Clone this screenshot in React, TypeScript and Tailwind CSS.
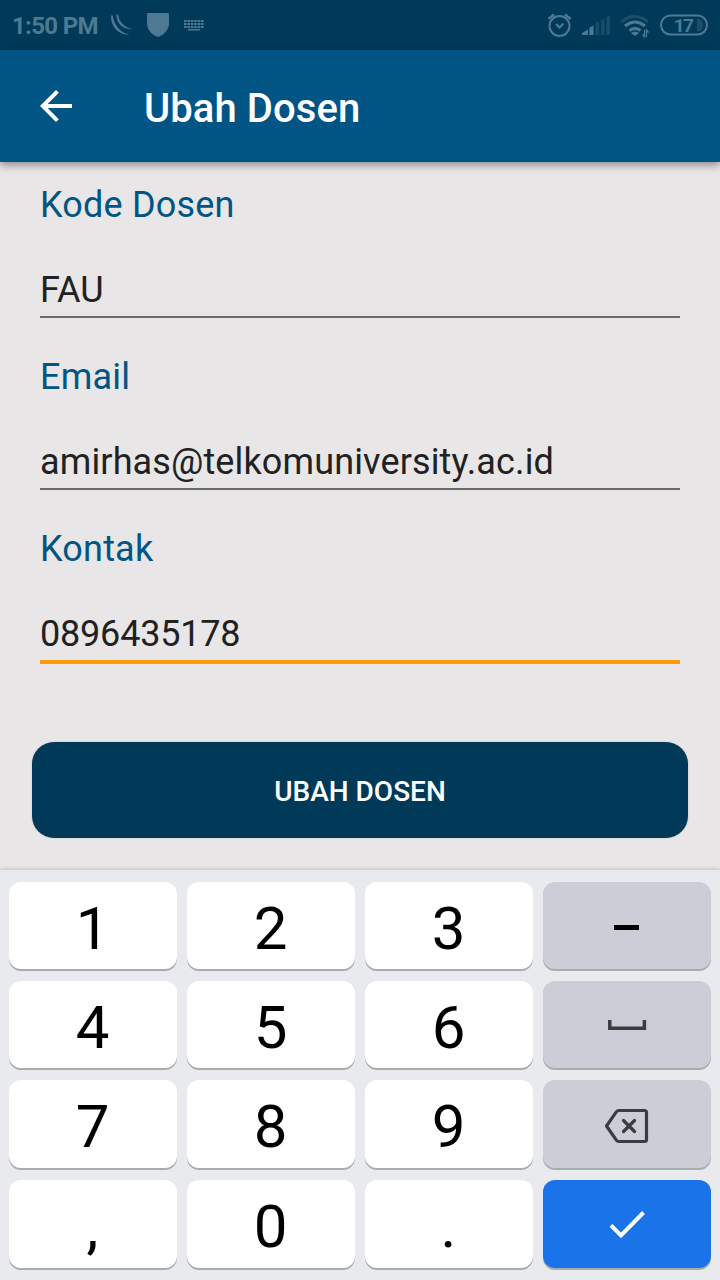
import React from "react";

type Field = { label: string; value: string; focused?: boolean };

const fields: Field[] = [
  { label: "Kode Dosen", value: "FAU" },
  { label: "Email", value: "amirhas@telkomuniversity.ac.id" },
  { label: "Kontak", value: "0896435178", focused: true },
];

function StatusBar() {
  return (
    <header className="flex h-[50px] shrink-0 items-center bg-[#003a58] pl-3 pr-3 text-[#4d7a92]">
      <span className="w-[98px] whitespace-nowrap pt-[2px] text-[24px] leading-7 font-bold tracking-[-0.65px]">1:50 PM</span>
      <svg className="h-[50px] w-[24px]" viewBox="110 0 24 50" fill="currentColor">
        <path d="M111 15.500c-.5 11 8 20.500 19 19-8-.8-16-8.500-17.200-19z" />
        <path d="M116.500 14.500c-.5 8 6 15.800 16 14.300-7-.5-13-6-14.500-14.300z" />
      </svg>
      <svg className="ml-[12px] h-[50px] w-[24px]" viewBox="146 0 24 50" fill="currentColor">
        <path d="M148 13h20q1 0 1 1v9c0 6-4 11-9.500 13.500q-1.500.7-3 0C151 34 147 29 147 23v-9q0-1 1-1z" />
      </svg>
      <svg className="ml-[12px] h-[50px] w-[24px]" viewBox="182 0 24 50" fill="none" stroke="currentColor" strokeWidth="2">
        <path d="M184 21h20M184 24h20M184 27h20" strokeDasharray="2.600 .8" />
        <path d="M188 29.700h12" strokeWidth="1.600" />
      </svg>
      <div className="ml-auto flex items-center">
        <svg className="h-[50px] w-[28px]" viewBox="546 0 28 50" fill="none" stroke="currentColor" strokeWidth="2">
          <circle cx="559.500" cy="26" r="10" />
          <path d="M556 24l3.500 3.500 4-4" />
          <path d="M548.500 19l5.500-4.500M565 14.500l5.500 4.500" strokeWidth="2.500" />
        </svg>
        <svg className="ml-[6px] h-[50px] w-[32px]" viewBox="580 0 32 50" fill="currentColor">
          <path d="M582 35v-2l6-3.500V35zM589.500 35v-7.500l4-2V35z" />
          <path d="M595.500 35V23.500l3.500-2V35zM601 35V20.500l3.500-2V35zM606.500 35V17l3.500-2v20z" opacity=".3" />
        </svg>
        <svg className="ml-[6px] h-[50px] w-[34px]" viewBox="618 0 34 50" fill="none" stroke="currentColor" strokeWidth="3">
          <path d="M621.500 22q13-11 26.500 0" opacity=".35" />
          <path d="M625 26q10-8 20 0M629.500 30.500q5.500-4 11 0" />
          <path d="M631 33q4-3 8 0l-4 3z" fill="currentColor" stroke="none" />
          <path d="M644.500 30v7l-2-2.500M646.500 37v-7l2 2.500" strokeWidth="1.300" />
        </svg>
        <div className="ml-[8px] flex h-[21px] w-[48px] -translate-y-[0.500px] items-center justify-end rounded-full border-2 border-current pr-[3px]">
          <span className="mr-[5px] text-[19px] leading-none font-bold tracking-[-1.800px]">17</span>
          <span className="h-[13px] w-[6px] rounded-r-full bg-[#1b4f6b]" />
        </div>
      </div>
    </header>
  );
}

function TextField({ label, value, focused }: Field) {
  return (
    <label className="flex h-[172px] flex-col text-[36px] leading-[42px] tracking-[0.130px]">
      <span className="tracking-[0.200px] text-[#005585]">{label}</span>
      <span
        className={
          focused
            ? "mt-[43px] h-[51px] border-b-4 border-[#ff9a0a] tracking-[-0.200px] text-[#212121]"
            : "mt-[43px] h-[49px] border-b-2 border-[#6c6b6c] text-[#212121]"
        }
      >
        {value}
      </span>
    </label>
  );
}

function SpaceIcon() {
  return (
    <svg className="h-[40px] w-[48px]" viewBox="603 1005 48 40" fill="none" stroke="#3c3c3e" strokeWidth="3.500">
      <path d="M609.800 1020v8.300h34.600V1020" />
    </svg>
  );
}

function BackspaceIcon() {
  return (
    <svg className="h-[44px] w-[48px]" viewBox="603 1102 48 44" fill="none" stroke="#3c3c3e" strokeWidth="3.200" strokeLinejoin="round">
      <path d="M618.500 1110.500h26q2 0 2 2v27q0 2-2 2h-26q-1 0-2-1.200l-10-14.300 10-14.300q1-1.200 2-1.200z" />
      <path d="M623.500 1120.500l11 11M634.500 1120.500l-11 11" strokeLinecap="round" />
    </svg>
  );
}

function CheckIcon() {
  return (
    <svg className="h-[40px] w-[48px]" viewBox="603 1204 48 40" fill="none" stroke="white" strokeWidth="4">
      <path d="M611 1225.300l10 10L643.500 1212.500" />
    </svg>
  );
}

function Key({ children, tone = "light" }: { children: React.ReactNode; tone?: "light" | "gray" | "blue" }) {
  const tones = {
    light: "bg-white pt-[6px] pr-px",
    gray: "bg-[#cbced6]",
    blue: "bg-[#1a73e8]",
  };
  return (
    <button
      className={`flex items-center justify-center rounded-[12px] text-[60px] leading-[70px] text-black shadow-[0_2px_0_#a9abae] ${tones[tone]}`}
    >
      {children}
    </button>
  );
}

export default function App() {
  return (
    <div className="flex h-[1280px] w-[720px] flex-col overflow-hidden bg-[#e8e6e7] font-['Roboto',sans-serif]">
      <StatusBar />
      <nav className="z-10 flex h-[112px] shrink-0 items-center bg-[#005585] pl-8 text-white shadow-[0_3px_8px_rgba(0,0,0,0.4)]">
        <svg className="h-12 w-12" viewBox="0 0 24 24" fill="white">
          <path d="M20 11H7.830l5.590-5.590L12 4l-8 8 8 8 1.410-1.410L7.830 13H20v-2z" />
        </svg>
        <h1 className="ml-16 pt-[6px] text-[40px] leading-[48px] font-medium tracking-[0.080px]">Ubah Dosen</h1>
      </nav>
      <main className="flex h-[708px] shrink-0 flex-col px-8 pt-[22px]">
        <form className="px-2">
          {fields.map((f) => (
            <TextField key={f.label} {...f} />
          ))}
        </form>
        <button className="mt-[42px] h-24 rounded-[22px] bg-[#003a58] pt-[4px] text-[28px] font-medium text-white shadow-[0_0_2px_rgba(0,0,0,0.15)]">
          UBAH DOSEN
        </button>
      </main>
      <section className="grid h-[410px] shrink-0 grid-cols-4 grid-rows-[87px_87px_88px_88px] content-start gap-x-[10px] gap-y-[12px] bg-[#e8eaed] px-[9px] pt-[12px] shadow-[0_-1px_4px_rgba(0,0,0,0.15)]">
        <Key>1</Key>
        <Key>2</Key>
        <Key>3</Key>
        <Key tone="gray"><span className="mt-1 mr-px h-[5px] w-[25px] bg-black" /></Key>
        <Key>4</Key>
        <Key>5</Key>
        <Key>6</Key>
        <Key tone="gray"><SpaceIcon /></Key>
        <Key>7</Key>
        <Key>8</Key>
        <Key>9</Key>
        <Key tone="gray"><BackspaceIcon /></Key>
        <Key>,</Key>
        <Key>0</Key>
        <Key>.</Key>
        <Key tone="blue"><CheckIcon /></Key>
      </section>
    </div>
  );
}
